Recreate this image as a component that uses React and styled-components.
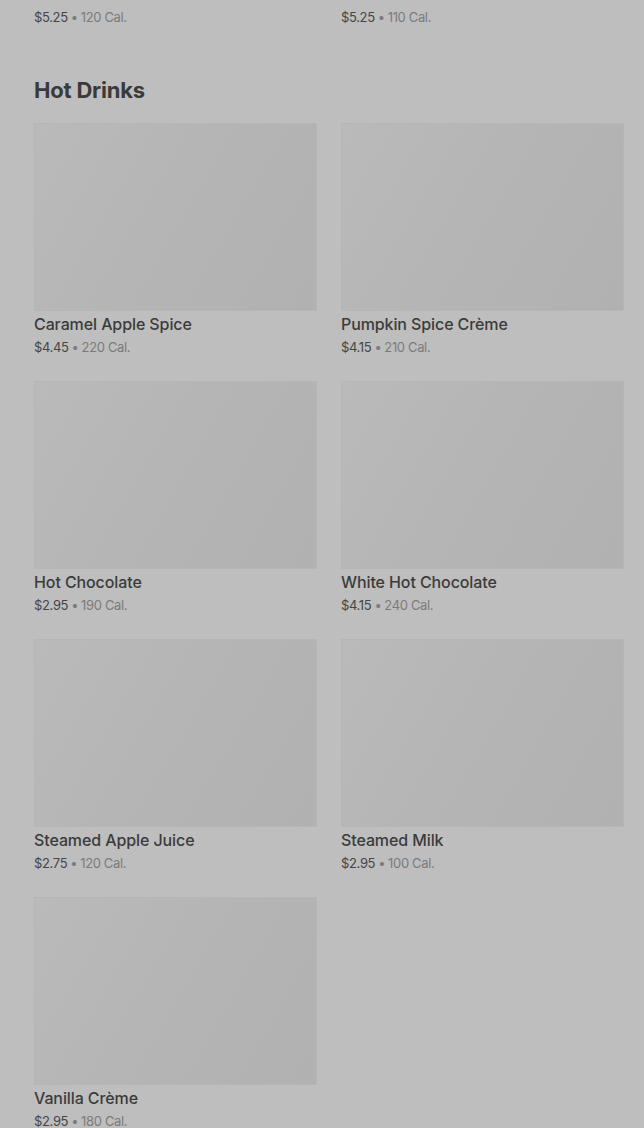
import styled, { createGlobalStyle } from "styled-components";

const GlobalStyle = createGlobalStyle`
  html, body {
    margin: 0;
    padding: 0;
    background: #bebebe;
  }
  body {
    font-family: Inter, "Noto Sans", sans-serif;
    -webkit-font-smoothing: antialiased;
  }
`;

const Page = styled.div`
  padding: 4px 20px 40px 34px;
`;

const Grid = styled.div`
  display: grid;
  grid-template-columns: 283px 283px;
  column-gap: 24px;
  row-gap: 25px;
`;

const SectionTitle = styled.h2`
  margin: 50px 0 19px;
  font-size: 22px;
  line-height: 28px;
  font-weight: 700;
  letter-spacing: -0.2px;
  color: #3a3a3a;
`;

const Card = styled.div`
  display: flex;
  flex-direction: column;
`;

const Thumb = styled.div`
  height: 188px;
  box-sizing: border-box;
  border: 1px solid #b6b6b6;
  background: linear-gradient(120deg, #bababa 0%, #b5b5b5 45%, #b1b1b1 100%);
`;

const Name = styled.div`
  margin-top: 3px;
  font-size: 16px;
  line-height: 20px;
  font-weight: 500;
  letter-spacing: -0.1px;
  color: #3b3b3b;
`;

const Meta = styled.div`
  margin-top: 4px;
  font-size: 13px;
  line-height: 18px;
  color: #7b7b7b;
  letter-spacing: -0.35px;
`;

const Price = styled.span`
  color: #454545;
`;

const Dot = styled.span`
  margin: 0 3px;
`;

const previous = [
  { price: "$5.25", cal: "120 Cal." },
  { price: "$5.25", cal: "110 Cal." },
];

const hotDrinks = [
  { name: "Caramel Apple Spice", price: "$4.45", cal: "220 Cal." },
  { name: "Pumpkin Spice Crème", price: "$4.15", cal: "210 Cal." },
  { name: "Hot Chocolate", price: "$2.95", cal: "190 Cal." },
  { name: "White Hot Chocolate", price: "$4.15", cal: "240 Cal." },
  { name: "Steamed Apple Juice", price: "$2.75", cal: "120 Cal." },
  { name: "Steamed Milk", price: "$2.95", cal: "100 Cal." },
  { name: "Vanilla Crème", price: "$2.95", cal: "180 Cal." },
];

function PriceLine({ price, cal }) {
  return (
    <Meta>
      <Price>{price}</Price>
      <Dot>•</Dot>
      {cal}
    </Meta>
  );
}

export default function App() {
  return (
    <>
      <GlobalStyle />
      <Page>
        <Grid>
          {previous.map((item, i) => (
            <PriceLine key={i} price={item.price} cal={item.cal} />
          ))}
        </Grid>
        <SectionTitle>Hot Drinks</SectionTitle>
        <Grid>
          {hotDrinks.map(item => (
            <Card key={item.name}>
              <Thumb />
              <Name>{item.name}</Name>
              <PriceLine price={item.price} cal={item.cal} />
            </Card>
          ))}
        </Grid>
      </Page>
    </>
  );
}
